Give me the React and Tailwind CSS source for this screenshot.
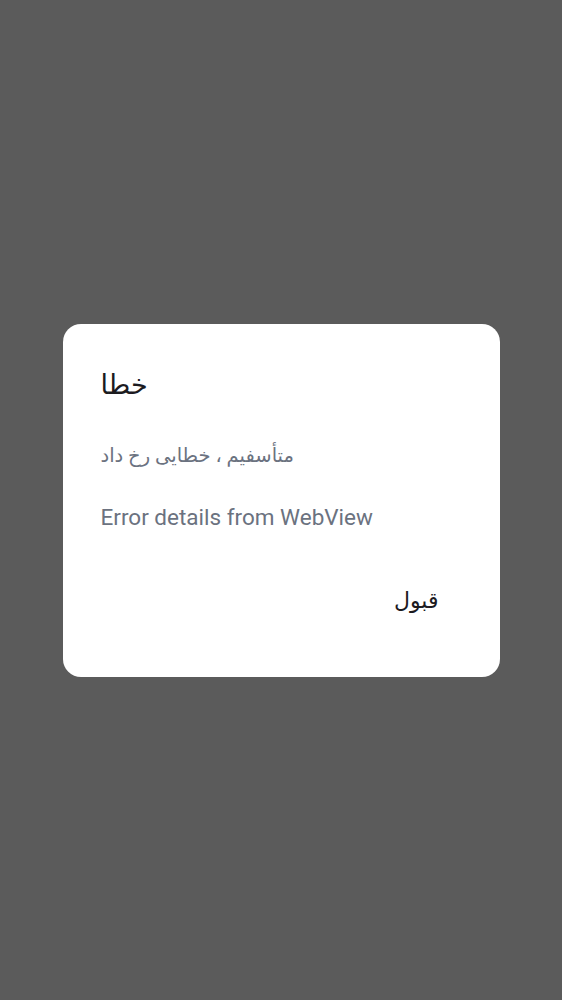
export default function App() {
  return (
    <div
      className="min-h-screen w-full flex items-center justify-center bg-[#5b5b5b]"
      style={{ fontFamily: 'Roboto, "DejaVu Sans", sans-serif' }}
    >
      <div className="w-[437px] h-[353px] bg-white rounded-[18px] pl-[38px] pr-[61px] pt-[44px] flex flex-col">
        <h2 className="text-[27px] leading-[34px] text-[#1c1b1f] font-normal">خطا</h2>
        <p className="mt-[41px] text-[19.5px] leading-[26px] text-[#6b7280]">متأسفیم ، خطایی رخ داد</p>
        <p className="mt-[34px] text-[22.5px] leading-[28px] text-[#6b7280]">Error details from WebView</p>
        <div className="mt-[55px] flex justify-end">
          <button className="text-[22px] leading-[30px] text-[#1c1b1f]">قبول</button>
        </div>
      </div>
    </div>
  );
}
